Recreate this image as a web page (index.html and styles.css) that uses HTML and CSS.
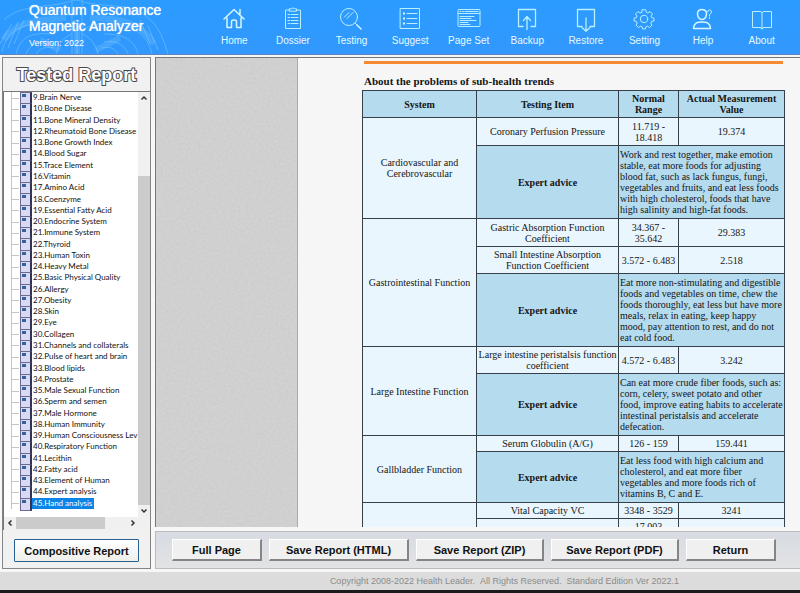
FILE: index.html
```html
<!DOCTYPE html>
<html lang="en">
<head>
<meta charset="utf-8">
<title>Quantum Resonance Magnetic Analyzer</title>
<link rel="stylesheet" href="styles.css">
</head>
<body>
<header class="top">
  <svg class="body-art" viewBox="0 0 170 54" preserveAspectRatio="xMinYMin slice" fill="none" stroke="#a5e0ff" aria-hidden="true">
    <g opacity=".35">
      <path d="M4 20C20 4 48 8 68 2C76 -1 78 0 84 2C104 8 130 2 146 16C160 26 164 42 168 54"/>
      <path d="M2 52C6 34 16 26 36 24C52 22 62 24 74 30M152 54C148 36 136 28 118 24C104 22 92 24 82 30"/>
      <path d="M16 54C20 38 30 32 50 34M26 54C30 44 38 40 52 42M36 54C40 48 46 46 54 48M138 54C134 40 124 34 104 34M128 54C124 44 116 40 104 42M118 54C114 48 110 46 102 48"/>
      <path d="M72 0V54M82 0V54M72 34C62 38 58 46 56 54M82 34C92 38 96 46 98 54M77 28V54"/>
      <path d="M8 30L0 44M12 24L2 38M18 22L8 48M24 20L14 44M140 20L150 44M148 26L158 50"/>
    </g>
    <g stroke-width="6" opacity=".18">
      <path d="M4 40C18 18 46 20 66 18M90 18C116 18 140 20 154 44M77 20V54M40 40L60 50M96 50L120 38"/>
    </g>
  </svg>
  <div class="brand">
    <h1>Quantum Resonance<br>Magnetic Analyzer</h1>
    <p>Version: 2022</p>
  </div>
  <nav class="tools">
    <a href="#home"><svg viewBox="0 0 24 26"><path class="b" d="M2 13L12 3.500L22 13M5 12V21.500H9.500V15.500Q9.500 14 12 14Q14.500 14 14.500 15.500V21.500H19V12M18 8V3.500"/></svg>Home</a>
    <a href="#dossier"><svg viewBox="0 0 24 26"><path d="M8 4H4.500V22.500H19.500V4H16M8.500 2.800H10.500Q12 .8 13.500 2.800H15.500V5.200H8.500ZM7 8.500H8.500M10 8.500H17M7 11.500H8.500M10 11.500H17M7 14.500H8.500M10 14.500H17M7 17.500H8.500M10 17.500H17"/></svg>Dossier</a>
    <a href="#testing"><svg viewBox="0 0 24 26"><circle cx="10" cy="11" r="8.500"/><path d="M5.500 11L10 6.500M8 12.500L14 6.500M16 17L18 19"/><path class="b" d="M18 19L22 23"/></svg>Testing</a>
    <a href="#suggest"><svg viewBox="0 0 24 26"><path d="M2.500 2.500H21.500V22.500H2.500ZM9 7.500H19M9 12.500H19M9 17.500H19"/><path class="dots" d="M5 6.500H7V8.500H5ZM5 11.500H7V13.500H5ZM5 16.500H7V18.500H5Z"/></svg>Suggest</a>
    <a href="#pageset"><svg viewBox="0 0 24 26"><rect x="1" y="3.500" width="22" height="17" rx="1"/><path d="M1 7.500H23M3 5.500H4M5.500 5.500H6.500M8 5.500H21M3 10.500H17M3 12.500H14M3 14.500H19M3 16.500H11M3 18.500H13"/></svg>Page Set</a>
    <a href="#backup"><svg viewBox="0 0 24 26"><path class="m" d="M8 20.500H3.500V3.500H20.500V20.500H16M12 23.500V11M8.500 14.500L12 10.500L15.500 14.500"/></svg>Backup</a>
    <a href="#restore"><svg viewBox="0 0 24 26"><path class="m" d="M8 20.500H3.500V3.500H20.500V20.500H16M12 12V25M8 21.500L12 25.300L16 21.500"/></svg>Restore</a>
    <a href="#setting"><svg viewBox="0 0 24 26"><circle cx="12" cy="13" r="3.700"/><path d="M10.200 3.800H13.800L14.300 6.400L15.900 7L18 5.500L20.500 8L19 10.100L19.600 11.700L22 12.200V15L19.600 15.300L18.800 17L20 19.200L17.500 21.500L15.500 20.200L13.800 20.900L13.300 23H10.700L10.200 20.900L8.500 20.200L6.500 21.500L4 19.200L5.200 17L4.400 15.300L2 15V12.200L4.400 11.700L5 10.100L3.500 8L6 5.500L8.100 7L9.700 6.400Z"/></svg>Setting</a>
    <a href="#help"><svg viewBox="0 0 24 26"><path class="b" d="M11 3.500C6 3.500 6 8 7 10.500C8 13 9 13.500 11 13.500S14 13 15 10.500C16 8 16 3.500 11 3.500ZM2.500 22.500C3 17 6 16 11 16S19 17 19.500 22.500Z"/><path d="M16.500 6Q16.500 4 18.500 4T20.500 6Q20.500 7.500 18.500 8.500V10M18.500 11.500V12.500"/></svg>Help</a>
    <a href="#about"><svg viewBox="0 0 24 26"><path d="M12 6.500Q11.500 5.500 10 5.500H2.500V21.500H10Q12 21.500 12 23M12 6.500Q12.500 5.500 14 5.500H21.500V21.500H14Q12 21.500 12 23V6.500"/></svg>About</a>
  </nav>
</header>

<main class="work">
  <aside class="side">
    <h2>Tested Report</h2>
    <div class="tree">
      <ul>
        <li>9.Brain Nerve</li><li>10.Bone Disease</li><li>11.Bone Mineral Density</li><li>12.Rheumatoid Bone Disease</li><li>13.Bone Growth Index</li><li>14.Blood Sugar</li><li>15.Trace Element</li><li>16.Vitamin</li><li>17.Amino Acid</li><li>18.Coenzyme</li><li>19.Essential Fatty Acid</li><li>20.Endocrine System</li><li>21.Immune System</li><li>22.Thyroid</li><li>23.Human Toxin</li><li>24.Heavy Metal</li><li>25.Basic Physical Quality</li><li>26.Allergy</li><li>27.Obesity</li><li>28.Skin</li><li>29.Eye</li><li>30.Collagen</li><li>31.Channels and collaterals</li><li>32.Pulse of heart and brain</li><li>33.Blood lipids</li><li>34.Prostate</li><li>35.Male Sexual Function</li><li>36.Sperm and semen</li><li>37.Male Hormone</li><li>38.Human Immunity</li><li>39.Human Consciousness Lev</li><li>40.Respiratory Function</li><li>41.Lecithin</li><li>42.Fatty acid</li><li>43.Element of Human</li><li>44.Expert analysis</li><li><span class="picked">45.Hand analysis</span></li>
      </ul>
      <div class="vbar">
        <svg viewBox="0 0 12 12"><path d="M3.500 7.500L6 5L8.500 7.500"/></svg>
        <div class="vtrack"><div class="vthumb"></div></div>
        <svg viewBox="0 0 12 12"><path d="M3.500 4.500L6 7L8.500 4.500"/></svg>
      </div>
      <div class="hbar">
        <svg viewBox="0 0 12 12"><path d="M7.500 3.500L5 6L7.500 8.500"/></svg>
        <div class="htrack"><div class="hthumb"></div></div>
        <svg viewBox="0 0 12 12"><path d="M4.500 3.500L7 6L4.500 8.500"/></svg>
      </div>
    </div>
    <button class="composite" type="button">Compositive Report</button>
  </aside>

  <div class="content">
    <section class="viewer">
      <svg class="desk" aria-hidden="true">
        <filter id="grain"><feTurbulence type="fractalNoise" baseFrequency=".4" numOctaves="2"/><feColorMatrix values="0 0 0 0 .4  0 0 0 0 .4  0 0 0 0 .4  .3 0 0 0 -.1"/></filter>
        <rect width="100%" height="100%" filter="url(#grain)"/>
      </svg>
      <article class="page">
        <hr>
        <h3>About the problems of sub-health trends</h3>
        <table>
          <colgroup><col class="c1"><col class="c2"><col class="c3"><col></colgroup>
          <thead>
            <tr><th>System</th><th>Testing Item</th><th>Normal Range</th><th>Actual Measurement Value</th></tr>
          </thead>
          <tbody>
            <tr class="tall"><td rowspan="2">Cardiovascular and Cerebrovascular</td><td>Coronary Perfusion Pressure</td><td>11.719 -<br>18.418</td><td>19.374</td></tr>
            <tr class="advice"><th>Expert advice</th><td colspan="2">Work and rest together, make emotion stable, eat more foods for adjusting blood fat, such as lack fungus, fungi, vegetables and fruits, and eat less foods with high cholesterol, foods that have high salinity and high-fat foods.</td></tr>
            <tr class="tall"><td rowspan="3">Gastrointestinal Function</td><td>Gastric Absorption Function Coefficient</td><td>34.367 -<br>35.642</td><td>29.383</td></tr>
            <tr><td>Small Intestine Absorption Function Coefficient</td><td>3.572 - 6.483</td><td>2.518</td></tr>
            <tr class="advice"><th>Expert advice</th><td colspan="2">Eat more non-stimulating and digestible foods and vegetables on time, chew the foods thoroughly, eat less but have more meals, relax in eating, keep happy mood, pay attention to rest, and do not eat cold food.</td></tr>
            <tr><td rowspan="2">Large Intestine Function</td><td>Large intestine peristalsis function coefficient</td><td>4.572 - 6.483</td><td>3.242</td></tr>
            <tr class="advice"><th>Expert advice</th><td colspan="2">Can eat more crude fiber foods, such as: corn, celery, sweet potato and other food, improve eating habits to accelerate intestinal peristalsis and accelerate defecation.</td></tr>
            <tr><td rowspan="2">Gallbladder Function</td><td>Serum Globulin (A/G)</td><td>126 - 159</td><td>159.441</td></tr>
            <tr class="advice"><th>Expert advice</th><td colspan="2">Eat less food with high calcium and cholesterol, and eat more fiber vegetables and more foods rich of vitamins B, C and E.</td></tr>
            <tr><td rowspan="2"></td><td>Vital Capacity VC</td><td>3348 - 3529</td><td>3241</td></tr>
            <tr><td></td><td>17.003<br>&nbsp;</td><td></td></tr>
          </tbody>
        </table>
      </article>
    </section>
    <div class="actions">
      <button class="short" type="button">Full Page</button>
      <button class="long" type="button">Save Report (HTML)</button>
      <button type="button">Save Report (ZIP)</button>
      <button type="button">Save Report (PDF)</button>
      <button class="short" type="button">Return</button>
    </div>
  </div>
</main>
<footer>Copyright 2008-2022 Health Leader. &nbsp;All Rights Reserved. &nbsp;Standard Edition Ver 2022.1</footer>
</body>
</html>
```
FILE: styles.css
```css
* { box-sizing: border-box; }
body {
  margin: 0;
  height: 100vh;
  display: flex;
  flex-direction: column;
  overflow: hidden;
  background: #f7f7f7;
  border-bottom: 3px solid #1b1b1b;
  font-family: "Liberation Sans", Arial, sans-serif;
}
h1, h2, h3, p, ul { margin: 0; padding: 0; }

.top {
  position: relative;
  flex: none;
  height: 55px;
  display: flex;
  background: linear-gradient(#2b9bff, #3298fd);
  border-bottom: 1px solid #5f86b4;
  color: #fff;
}
.body-art { position: absolute; left: 0; top: 0; width: 170px; height: 54px; }
.brand { position: relative; flex: none; width: 205px; padding: 2px 0 0 29px; }
.brand h1 { font-size: 14px; line-height: 16px; font-weight: 400; text-shadow: 0 0 1px #fff; }
.brand p { margin-top: 3px; font-size: 9px; line-height: 12px; }
.tools { flex: 1; display: grid; grid-template-columns: repeat(10, 1fr); padding-right: 9px; }
.tools a {
  display: flex;
  flex-direction: column;
  align-items: center;
  gap: 2px;
  padding-top: 6px;
  color: #e8f8ff;
  font-size: 10px;
  line-height: 14px;
  text-decoration: none;
  white-space: nowrap;
}
.tools svg { width: 24px; height: 26px; fill: none; stroke: #b9f0ff; stroke-width: 1; stroke-linejoin: round; stroke-linecap: round; }
.tools .b { stroke: #d6f7ff; stroke-width: 1.5; }
.tools .m { stroke-width: 1.3; }
.tools .dots { fill: #d6f7ff; stroke: none; }

.work { flex: 1; min-height: 0; display: flex; gap: 4px; padding: 2px 0 3px 2px; }
.side {
  flex: none;
  width: 149px;
  display: flex;
  flex-direction: column;
  background: #f1f1f1;
  border: 1px solid #858585;
}
.side h2 {
  height: 33px;
  line-height: 35px;
  text-align: center;
  font-size: 18px;
  font-weight: 700;
  color: #fff;
  -webkit-text-stroke: 2px #4a4a4a;
  paint-order: stroke fill;
}
.tree {
  flex: 1;
  min-height: 0;
  display: grid;
  grid-template: minmax(0, 1fr) 13px / minmax(0, 1fr) 12px;
  background: #fff;
  border-top: 1px solid #777;
  border-left: 1px solid #777;
}
.tree ul {
  display: flex;
  flex-direction: column;
  overflow: hidden;
  padding: 0 0 8px 7px;
  list-style: none;
  font: 8px/11px Lato, "Liberation Sans", sans-serif;
  color: #111;
}
.tree li {
  flex: 1;
  position: relative;
  display: flex;
  align-items: center;
  padding-left: 21px;
  border-left: 1px solid #c4c4c4;
  white-space: nowrap;
}
.tree li::before { content: ""; position: absolute; left: 0; top: 50%; width: 7px; border-top: 1px solid #c4c4c4; }
.tree li::after {
  content: "";
  position: absolute;
  left: 8px;
  top: 0;
  width: 9px;
  height: 11px;
  border: 1px solid #6a6a90;
  border-right: 2px solid #33335a;
  background: linear-gradient(#35629f, #35629f) 1px 1px / 4px 3px no-repeat, #d9d9f4;
}
.picked { margin-left: -2px; padding: 0 2px; background: #0b84e8; color: #fff; }
.tree svg { flex: none; width: 12px; height: 12px; fill: none; stroke: #333; stroke-width: 1.5; }
.vbar { display: flex; flex-direction: column; background: #f0f0f0; }
.vtrack { flex: 1; display: flex; flex-direction: column; justify-content: flex-end; }
.vthumb { height: 82%; background: #cbcbcb; }
.hbar { grid-column: 1 / -1; display: flex; padding-right: 11px; background: #f0f0f0; }
.htrack { flex: 1; }
.hthumb { width: 80%; height: 12px; background: #cbcbcb; }
button { font: bold 11px "Liberation Sans", Arial, sans-serif; color: #111; padding: 0; }
.composite { flex: none; height: 23px; margin: 9px 11px 6px; background: linear-gradient(#fff, #eeeeea); border: 1px solid #28618f; border-radius: 1px; }

.content { flex: 1; min-width: 0; display: flex; flex-direction: column; gap: 4px; }
.viewer { position: relative; flex: 1; min-height: 0; display: flex; overflow: hidden; border-top: 1px solid #777; border-left: 1px solid #777; background: #f6f6f6; }
.desk { flex: none; width: 142px; height: 100%; background: #d2d2d2; border-right: 1px solid #aaa; }
.page { flex: 1; min-width: 0; padding: 3px 15px 0 64px; color: #151515; font-family: "Liberation Serif", "Times New Roman", serif; }
.page hr { height: 3px; margin: 0 2px; border: 0; background: #f58a31; }
.page h3 { margin: 10px 2px 2px; font-size: 11px; line-height: 14px; }
table { width: 100%; table-layout: fixed; border-collapse: collapse; font-size: 10px; line-height: 11px; }
.c1 { width: 114px; }
.c2 { width: 142px; }
.c3 { width: 60px; }
th, td { padding: 2px 1px; border: 1px solid #35404a; text-align: center; vertical-align: middle; background: #e9f6fe; }
th, .advice td { background: #b5dbef; }
.tall td { height: 28px; }
.advice td { padding: 3px 1px; text-align: left; }

.actions {
  flex: none;
  height: 38px;
  display: flex;
  align-items: center;
  gap: 7px;
  padding-left: 16px;
  background: linear-gradient(#d7dbe2, #e2e3e5);
  border: 1px solid #bbb;
  border-right: 0;
}
.actions button { flex: 0 1 128px; height: 22px; background: #f0f0f0; border: 1px solid #fff; border-right: 2px solid #858585; border-bottom: 2px solid #858585; }
.actions .short { flex-basis: 90px; }
.actions .long { flex-basis: 140px; }

footer { flex: none; height: 18px; padding-left: 209px; text-align: center; background: #dcdcdc; color: #8b8b8b; font-size: 9px; line-height: 18px; white-space: nowrap; }
```
